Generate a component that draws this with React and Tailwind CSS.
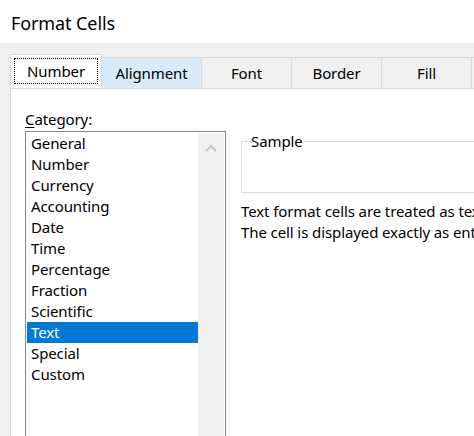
import React, { useState } from 'react';

const tabs = [
  { name: 'Number', width: 'w-[92px]' },
  { name: 'Alignment', width: 'w-[100px]' },
  { name: 'Font', width: 'w-[90px]' },
  { name: 'Border', width: 'w-[90px]' },
  { name: 'Fill', width: 'w-[90px]' },
  { name: 'Protection', width: 'w-[100px]' },
];

const categories = [
  'General',
  'Number',
  'Currency',
  'Accounting',
  'Date',
  'Time',
  'Percentage',
  'Fraction',
  'Scientific',
  'Text',
  'Special',
  'Custom',
];

export default function App() {
  const [activeTab] = useState('Number');
  const [selected, setSelected] = useState('Text');

  return (
    <div className="w-[474px] h-[436px] overflow-hidden bg-[#f0f0f0] text-black font-['Noto_Sans',sans-serif] text-[15px] tracking-[-0.1px]">
      {/* Title */}
      <div className="h-[43px] bg-white flex items-center pl-[11px] pt-[3px] text-[18px]">Format Cells</div>

      {/* Tabs */}
      <div className="pl-[10px] pt-[12px]">
        <div className="flex items-end h-[33px] relative z-10">
          {tabs.map((tab) =>
            tab.name === activeTab ? (
              <div
                key={tab.name}
                className={`${tab.width} shrink-0 h-[34px] bg-white border border-b-0 border-[#d9d9d9] p-[3px] pb-[4px]`}
              >
                <div className="h-full border border-dotted border-black flex items-center justify-center">
                  {tab.name}
                </div>
              </div>
            ) : (
              <div
                key={tab.name}
                className={`${tab.width} shrink-0 h-[31px] border-t border-r border-[#d9d9d9] flex items-center justify-center ${
                  tab.name === 'Alignment' ? 'bg-[#d9ebf9]' : ''
                }`}
              >
                {tab.name}
              </div>
            )
          )}
        </div>

        {/* Panel */}
        <div className="w-[700px] h-[400px] bg-white border-l border-t border-[#d9d9d9] flex pl-[14px] pt-[18px]">
          {/* Category */}
          <div className="w-[201px] shrink-0">
            <div className="h-[24px] leading-[24px]">
              <span className="underline underline-offset-2">C</span>ategory:
            </div>
            <div className="h-[320px] border border-[#828790] p-px flex">
              <div className="flex-1">
                {categories.map((c) => (
                  <div
                    key={c}
                    onClick={() => setSelected(c)}
                    className={`h-[21px] leading-[21px] pl-[4px] ${
                      selected === c ? 'bg-[#0078d7] text-white' : ''
                    }`}
                  >
                    {c}
                  </div>
                ))}
              </div>
              <div className="w-[26px] bg-[#f0f0f0] flex justify-center pt-[11px]">
                <svg width="12" height="8" viewBox="0 0 12 8">
                  <path d="M1 7 L6 2 L11 7" fill="none" stroke="#c4c4c4" strokeWidth="2" />
                </svg>
              </div>
            </div>
          </div>

          {/* Sample + description */}
          <div className="pl-[15px] pt-[25px] flex-1">
            <fieldset className="h-[61px] border border-[#dcdcdc] pl-[9px]">
              <legend className="leading-[18px]">Sample</legend>
            </fieldset>
            <div className="mt-[8px] leading-[21px] whitespace-nowrap">
              <div>Text format cells are treated as text even when a number is in the cell.</div>
              <div>The cell is displayed exactly as entered.</div>
            </div>
          </div>
        </div>
      </div>
    </div>
  );
}
